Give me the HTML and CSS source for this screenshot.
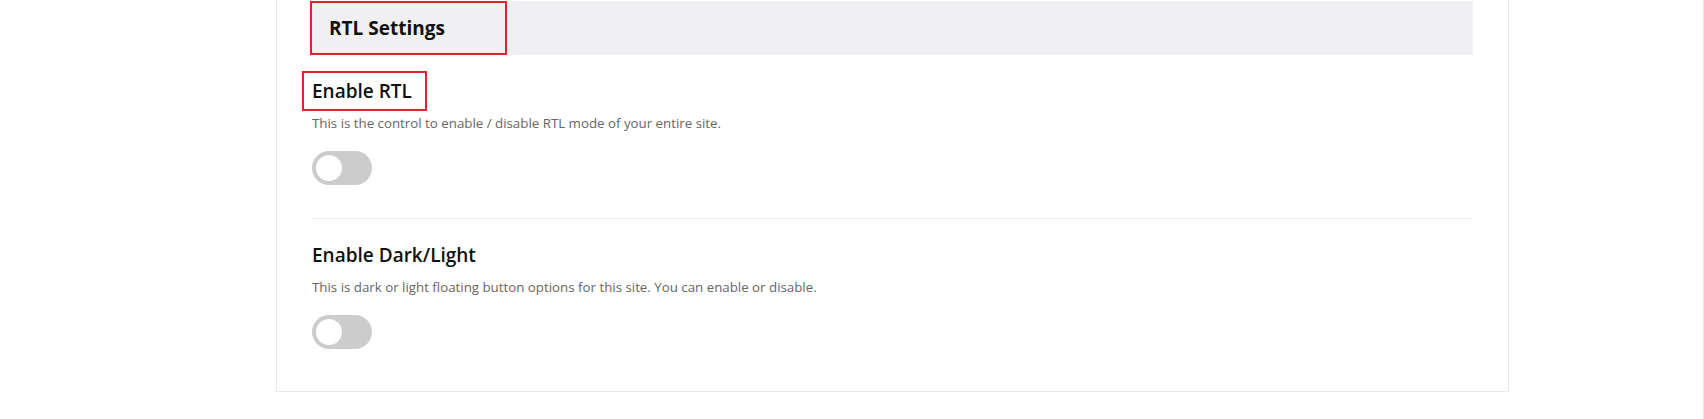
FILE: index.html
```html
<!DOCTYPE html>
<html lang="en">
<head>
<meta charset="utf-8">
<title>RTL Settings</title>
<link rel="stylesheet" href="styles.css">
</head>
<body>
<div class="page">
  <div class="card">
    <div class="card-header">
      <h2 class="card-title">RTL Settings</h2>
    </div>
    <div class="option">
      <h3 class="option-title marked">Enable RTL</h3>
      <p class="option-desc">This is the control to enable / disable RTL mode of your entire site.</p>
      <label class="switch"><input type="checkbox"><span class="slider"></span></label>
    </div>
    <div class="option last">
      <h3 class="option-title">Enable Dark/Light</h3>
      <p class="option-desc">This is dark or light floating button options for this site. You can enable or disable.</p>
      <label class="switch"><input type="checkbox"><span class="slider"></span></label>
    </div>
  </div>
</div>
</body>
</html>
```

FILE: styles.css
```css
html, body {
  margin: 0;
  padding: 0;
  background: #ffffff;
}
body {
  font-family: "Open Sans", "Noto Sans", sans-serif;
  color: #111;
}
.page {
  width: 1704px;
  height: 419px;
  box-sizing: border-box;
  border-right: 1px solid #e4e4e4;
  overflow: hidden;
}
.card {
  margin-left: 276px;
  width: 1233px;
  box-sizing: border-box;
  border: 1px solid #e9e9e9;
  border-top: 0;
  padding: 1px 35px 0 33px;
  background: #fff;
}
.card-header {
  height: 54px;
  background: #f0f0f2;
  display: flex;
}
.card-title {
  margin: 0;
  width: 197px;
  box-sizing: border-box;
  border: 2px solid #e0262c;
  padding: 0 0 0 17px;
  display: flex;
  align-items: center;
  font-size: 19px;
  font-weight: 700;
  color: #111;
}
.option {
  margin-left: 2px;
  padding: 22px 0 33px;
  border-bottom: 1px solid #ececec;
}
.option.last {
  border-bottom: 0;
  padding-bottom: 42px;
}
.option-title {
  margin: 0;
  font-size: 19px;
  line-height: 28px;
  font-weight: 600;
  color: #111;
}
.marked {
  position: relative;
  display: inline-block;
}
.marked::after {
  content: "";
  position: absolute;
  left: -10px;
  right: -15px;
  top: -6px;
  bottom: -6px;
  border: 2px solid #e0262c;
}
.option-desc {
  margin: 8px 0 0;
  font-size: 13.3px;
  line-height: 20px;
  color: #666;
}
.switch {
  position: relative;
  display: block;
  width: 60px;
  height: 34px;
  margin-top: 18px;
}
.switch input {
  opacity: 0;
  width: 0;
  height: 0;
  position: absolute;
}
.slider {
  position: absolute;
  inset: 0;
  background: #cccccc;
  border-radius: 34px;
}
.slider::before {
  content: "";
  position: absolute;
  left: 4px;
  top: 4px;
  width: 26px;
  height: 26px;
  border-radius: 50%;
  background: #fff;
}
```
